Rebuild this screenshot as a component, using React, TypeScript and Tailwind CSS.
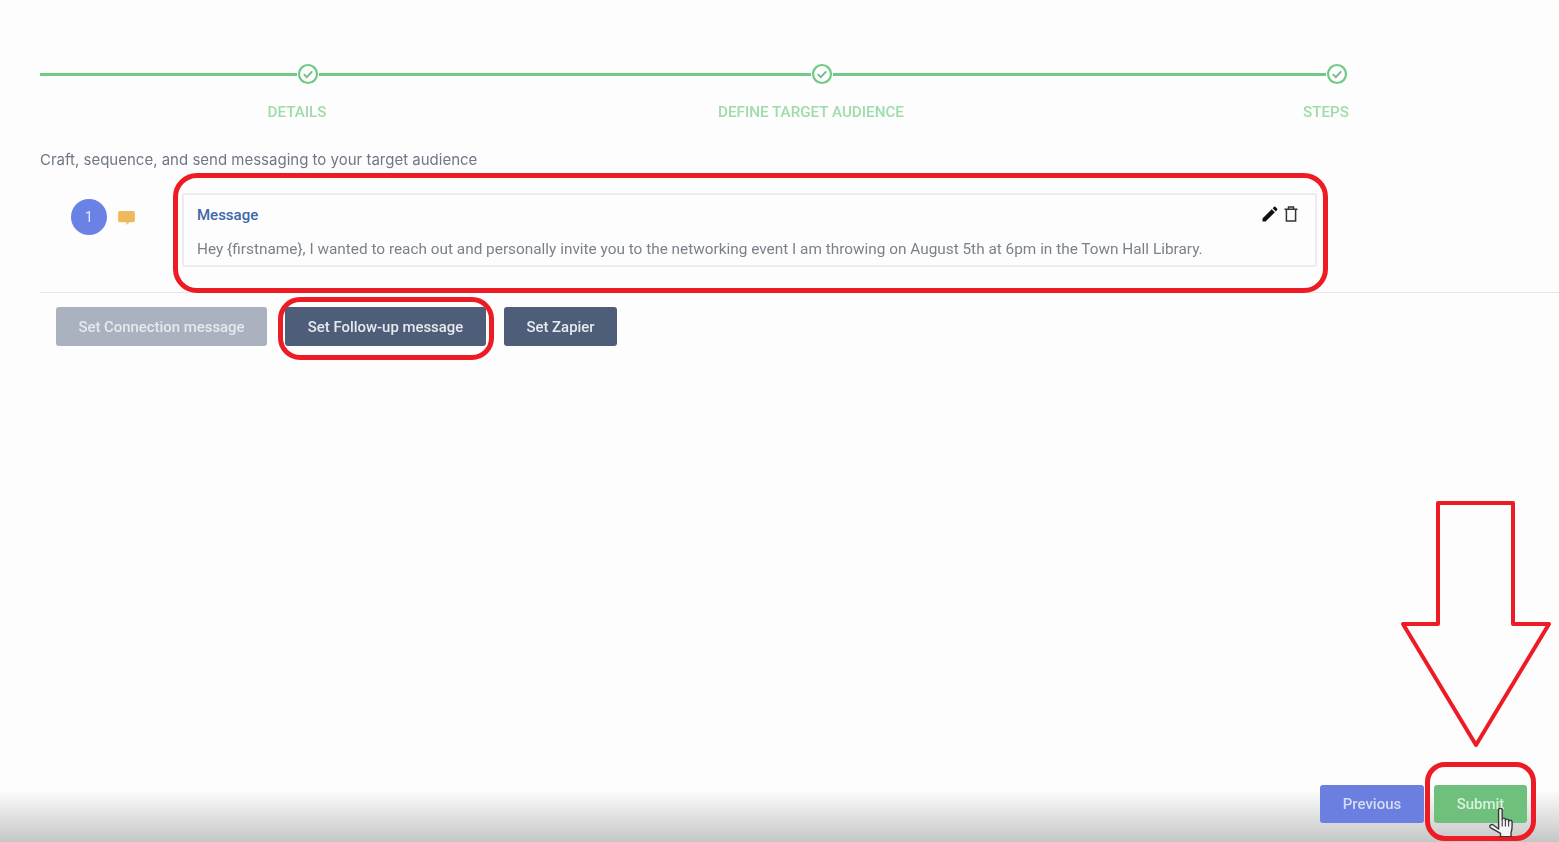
const steps = [
  { label: "DETAILS", width: "w-[279px]" },
  { label: "DEFINE TARGET AUDIENCE", width: "w-[514px]" },
  { label: "STEPS", width: "w-[515px]" },
]

function StepCheck() {
  return (
    <svg viewBox="0 0 22 22" className="w-[22px] h-[22px] shrink-0">
      <circle cx="11" cy="11" r="9" fill="#fdfdfd" stroke="#6fca86" strokeWidth="2.2" />
      <path d="M6.8 11.2l3 3L15.2 8.4" fill="none" stroke="#74b888" strokeWidth="1.8" />
    </svg>
  )
}

function HandCursor() {
  return (
    <svg viewBox="0 0 27 29" className="absolute left-[1489px] top-[808px] w-[27px] h-[29px]">
      <path
        d="M9.6 2.2c0-2.6 3.6-2.6 3.6 0v9.3c0-1.9 3.2-1.9 3.2 0v1c0-1.8 3.2-1.8 3.2 0v1c0-1.7 3.4-1.7 3.4 0 .3 4.6.1 8.6-1 11.5v3.6H11.5v-3.2L1.4 19.6c-1.5-1.9.9-4 2.8-2.6l5.4 4z"
        fill="#f4f4f4"
        stroke="#3a3a3a"
        strokeWidth="1.4"
        strokeLinejoin="round"
      />
      <path d="M13.2 11.5v7M16.4 12.5v6M19.6 13.5v5" fill="none" stroke="#3a3a3a" strokeWidth="1.1" />
    </svg>
  )
}

export default function App() {
  return (
    <div className="relative w-[1559px] h-[842px] overflow-hidden bg-[#fdfdfd] font-['Roboto',sans-serif]">
      <div className="flex flex-col h-full blur-[0.4px]">
        {/* Stepper */}
        <div className="flex pl-[40px] pt-[63px]">
          {steps.map((step) => (
            <div key={step.label} className={`${step.width} flex flex-col`}>
              <div className="flex items-center">
                <div className="flex-1 h-[3px] bg-[#6fca86]" />
                <StepCheck />
              </div>
              <div className="flex justify-end mt-[18px] pr-[22px]">
                <div className="w-0 flex justify-center">
                  <span className="whitespace-nowrap text-[15.2px] leading-[18px] font-medium text-[#9edcaa]">
                    {step.label}
                  </span>
                </div>
              </div>
            </div>
          ))}
        </div>

        <p className="ml-[40px] mt-[29px] text-[15px] leading-[20px] text-[#6f7785] font-['Inter',sans-serif]">
          Craft, sequence, and send messaging to your target audience
        </p>

        {/* Message row */}
        <div className="flex items-start ml-[71px] mt-[23px]">
          <div className="w-[36px] h-[36px] mt-[6px] rounded-full bg-[#6a82e6] flex items-center justify-center text-[14px] text-[#e9ecfb]">
            1
          </div>
          <svg viewBox="0 0 18 15" className="w-[17px] h-[14px] ml-[11px] mt-[18px]">
            <path
              d="M2 0h14a2 2 0 0 1 2 2v8a2 2 0 0 1-2 2h-4l-3 3v-3H2a2 2 0 0 1-2-2V2a2 2 0 0 1 2-2z"
              fill="#eeb95c"
            />
          </svg>
          <div className="ml-[47px] w-[1135px] h-[74px] border-2 border-[#ececec] rounded-[2px] pl-[13px] pr-[17px] pt-[10px] bg-[#fdfdfd]">
            <div className="flex items-start justify-between">
              <span className="text-[15px] leading-[20px] font-medium text-[#3f68a8]">Message</span>
              <div className="flex items-center gap-[4px] -mt-[1px]">
                <svg viewBox="0 0 24 24" className="w-[20px] h-[20px]">
                  <path
                    d="M3 17.25V21h3.75L17.81 9.94l-3.75-3.75L3 17.25zM20.71 7.04c.39-.39.39-1.02 0-1.41l-2.34-2.34c-.39-.39-1.02-.39-1.41 0l-1.83 1.83 3.75 3.75 1.83-1.83z"
                    fill="#111"
                  />
                </svg>
                <svg viewBox="0 0 14 16" className="w-[14px] h-[16px]">
                  <path
                    d="M0.5 3.2H13.5M4.5 3V1H9.5V3M2.4 3.2V15H11.6V3.2"
                    fill="none"
                    stroke="#333"
                    strokeWidth="1.5"
                  />
                </svg>
              </div>
            </div>
            <p className="mt-[14px] text-[15.36px] leading-[20px] text-[#7b818b] whitespace-nowrap">
              {"Hey {firstname}, I wanted to reach out and personally invite you to the networking event I am throwing on August 5th at 6pm in the Town Hall Library."}
            </p>
          </div>
        </div>

        <div className="ml-[40px] mt-[25px] h-px bg-[#e6e6e6]" />

        {/* Step actions */}
        <div className="flex gap-[18px] ml-[56px] mt-[14px]">
          <button className="w-[211px] h-[39px] pt-px rounded-[3px] bg-[#aab2bf] text-[14.9px] font-medium text-[#e6e9ee]">
            Set Connection message
          </button>
          <button className="w-[201px] h-[39px] pt-px rounded-[3px] bg-[#4e5d78] text-[14.9px] font-medium text-[#e6e9ee]">
            Set Follow-up message
          </button>
          <button className="w-[113px] h-[39px] pt-px rounded-[3px] bg-[#4e5d78] text-[14.9px] font-medium text-[#e6e9ee]">
            Set Zapier
          </button>
        </div>

        {/* Footer */}
        <div className="mt-auto h-[52px] bg-gradient-to-b from-[#fdfdfd] to-[#c6c6c6] flex justify-end items-start gap-[10px] pr-[32px]">
          <button className="-mt-[5px] w-[104px] h-[38px] rounded-[3px] bg-[#6a7fdf] text-[15px] font-medium text-[#d5dcf6]">
            Previous
          </button>
          <button className="-mt-[5px] w-[93px] h-[38px] rounded-[3px] bg-[#6fc07c] text-[15px] font-medium text-[#d8f0dc]">
            Submit
          </button>
        </div>
      </div>

      {/* Red annotations drawn over the screenshot */}
      <div className="absolute left-[173px] top-[173px] w-[1155px] h-[120px] rounded-[24px] border-[5px] border-[#ed1c24]" />
      <div className="absolute left-[278px] top-[297px] w-[216px] h-[63px] rounded-[22px] border-[5px] border-[#ed1c24]" />
      <div className="absolute left-[1425px] top-[762px] w-[111px] h-[79px] rounded-[20px] border-[5px] border-[#ed1c24]" />
      <svg viewBox="0 0 160 250" className="absolute left-[1396px] top-[500px] w-[160px] h-[250px]">
        <path
          d="M42 3H117V124H153L80 245L7 124H42z"
          fill="none"
          stroke="#ed1c24"
          strokeWidth="4"
          strokeLinejoin="round"
        />
      </svg>
      <HandCursor />
    </div>
  )
}
